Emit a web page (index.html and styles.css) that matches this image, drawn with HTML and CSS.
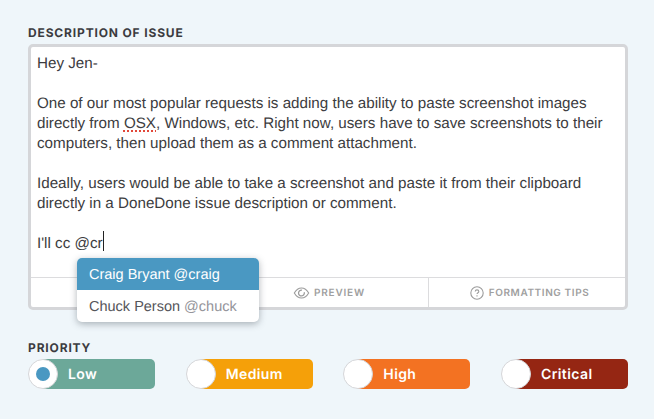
FILE: index.html
```html
<!DOCTYPE html>
<html lang="en">
<head>
<meta charset="utf-8">
<title>Description of issue</title>
<link rel="stylesheet" href="styles.css">
</head>
<body>
<form class="form">
  <div class="label label-desc">DESCRIPTION OF ISSUE</div>
  <div class="editor">
    <div class="editor-text">
      <p>Hey Jen-</p>
      <p>One of our most popular requests is adding the ability to paste screenshot images<br>directly from <span class="spell">OSX</span>, Windows, etc. Right now, users have to save screenshots to their<br>computers, then upload them as a comment attachment.</p>
      <p>Ideally, users would be able to take a screenshot and paste it from their clipboard<br>directly in a DoneDone issue description or comment.</p>
      <p>I'll cc @cr<span class="caret"></span></p>
    </div>
    <div class="editor-tools">
      <div class="tool"></div>
      <div class="tool">
        <svg class="icon-eye" width="17" height="12" viewBox="0 0 16 12" fill="none" stroke="#9c9c9c" stroke-width="1.1"><path d="M.8 6C2.6 2.9 5 1 8 1s5.400 1.900 7.200 5C13.400 9.100 11 11 8 11S2.600 9.100.8 6z"/><path d="M10.700 5.200A2.900 2.900 0 1 1 8.500 3.200" stroke-width="1.300"/></svg>
        <span>PREVIEW</span>
      </div>
      <div class="tool">
        <svg width="14" height="14" viewBox="0 0 14 14" fill="none" stroke="#9c9c9c" stroke-width="1.100"><circle cx="7" cy="7" r="6.200"/><path d="M5.200 5.500C5.300 4.400 6 3.900 7 3.900c1.100 0 1.800.6 1.800 1.500 0 1.300-1.800 1.300-1.800 2.700"/><path d="M7 9.300v1.100"/></svg>
        <span>FORMATTING TIPS</span>
      </div>
    </div>
    <ul class="menu">
      <li class="menu-item is-active">Craig Bryant @craig</li>
      <li class="menu-item">Chuck Person <span class="handle">@chuck</span></li>
    </ul>
  </div>
  <div class="label label-priority">PRIORITY</div>
  <div class="priorities">
    <div class="pill pill-low"><span class="knob"><span class="dot"></span></span>Low</div>
    <div class="pill pill-medium"><span class="knob"></span>Medium</div>
    <div class="pill pill-high"><span class="knob"></span>High</div>
    <div class="pill pill-critical"><span class="knob"></span>Critical</div>
  </div>
</form>
</body>
</html>
```

FILE: styles.css
```css
* { box-sizing: border-box; }
html, body { margin: 0; padding: 0; }
body {
  width: 654px;
  height: 419px;
  overflow: hidden;
  background: #eff6fa;
  font-family: "Liberation Sans", Arial, sans-serif;
  color: #3c3c40;
  text-rendering: geometricPrecision;
}
.form { padding: 25px 26px 0 28px; }
.label {
  font-family: Inter, "Liberation Sans", sans-serif;
  font-weight: 700;
  font-size: 12px;
  line-height: 15px;
  letter-spacing: 0.85px;
  color: #3b3b40;
}
.editor {
  position: relative;
  margin-top: 4px;
  height: 266px;
  background: #fff;
  border: 3px solid #d5d6d9;
  border-radius: 5px;
  display: flex;
  flex-direction: column;
}
.editor-text {
  flex: 1;
  padding: 7px 6px 0;
  font-size: 15.2px;
  line-height: 20px;
}
.editor-text p { margin: 0 0 20px; }
.spell {
  text-decoration: underline dotted #e2483a 2px;
  text-underline-offset: 2px;
}
.caret {
  display: inline-block;
  width: 1px;
  height: 20px;
  margin: -4px 0 -2px;
  background: #222;
  vertical-align: -1px;
}
.editor-tools {
  height: 30px;
  border-top: 1px solid #dcdcde;
  display: flex;
}
.tool {
  width: 199px;
  display: flex;
  align-items: center;
  justify-content: center;
  gap: 4px;
  font-family: Inter, "Liberation Sans", sans-serif;
  font-weight: 600;
  font-size: 10px;
  letter-spacing: 0.8px;
  color: #a0a0a0;
  border-left: 1px solid #dcdcde;
}
.tool:first-child { width: 198px; border-left: 0; }
.tool:last-child { flex: 1; gap: 5px; padding-left: 5px; letter-spacing: 0.6px; }
.menu {
  position: absolute;
  left: 46px;
  top: 211px;
  width: 182px;
  margin: 0;
  padding: 0;
  list-style: none;
  background: #fff;
  border-radius: 5px;
  overflow: hidden;
  box-shadow: 0 2px 7px rgba(60, 70, 80, 0.4);
}
.menu-item {
  height: 32px;
  padding-left: 12px;
  font-size: 14.5px;
  line-height: 34px;
  color: #55555a;
}
.menu-item.is-active { background: #4a98c2; color: #fff; }
.handle { color: #94949a; }
.label-priority { margin-top: 30px; }
.priorities {
  margin-top: 4px;
  display: flex;
  justify-content: space-between;
}
.pill {
  width: 127px;
  height: 30px;
  border-radius: 0 5px 5px 0;
  display: flex;
  align-items: center;
  gap: 10px;
  font-family: Inter, "Liberation Sans", sans-serif;
  font-weight: 600;
  font-size: 14px;
  letter-spacing: 0.4px;
  color: #fff;
}
.pill-low { background: linear-gradient(to right, transparent 15px, #6ca899 15px); }
.pill-medium { background: linear-gradient(to right, transparent 15px, #f5a009 15px); }
.pill-high { background: linear-gradient(to right, transparent 15px, #f37222 15px); }
.pill-critical { background: linear-gradient(to right, transparent 15px, #952613 15px); }
.knob {
  width: 30px;
  height: 30px;
  flex: none;
  background: #fff;
  border: 1px solid #d5d6d9;
  border-radius: 50%;
  display: flex;
  align-items: center;
  justify-content: center;
}
.dot {
  width: 14px;
  height: 14px;
  background: #4a98c2;
  border-radius: 50%;
}
```
